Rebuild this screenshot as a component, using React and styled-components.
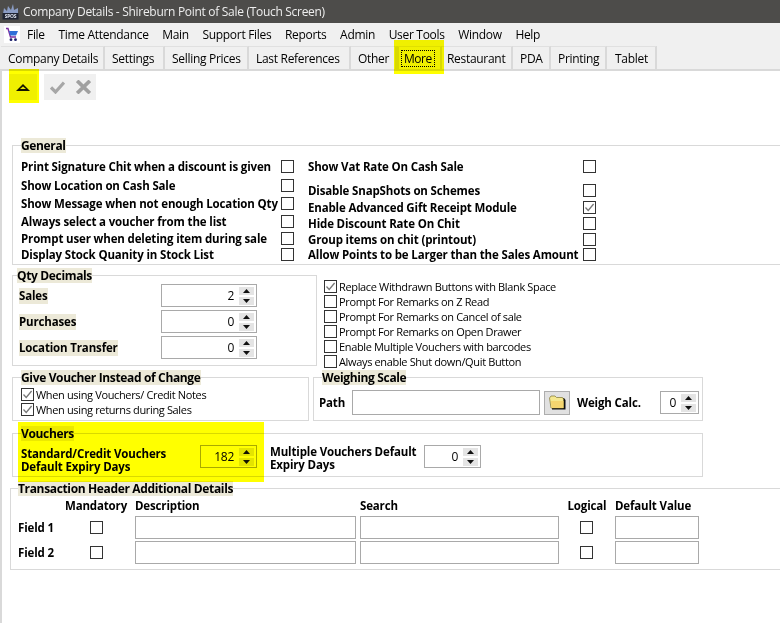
import React from "react";
import styled, { createGlobalStyle } from "styled-components";

const GlobalStyle = createGlobalStyle`
  html, body {
    margin: 0;
    padding: 0;
    background: #fff;
  }
  body {
    width: 780px;
    height: 623px;
    overflow: hidden;
    font-family: "Open Sans", "Noto Sans", sans-serif;
    color: #000;
  }
`;

// label, space under the row
const checksLeft = [
  ["Print Signature Chit when a discount is given", 5],
  ["Show Location on Cash Sale", 4],
  ["Show Message when not enough Location Qty", 4],
  ["Always select a voucher from the list", 3],
  ["Prompt user when deleting item during sale", 2],
  ["Display Stock Quanity in Stock List", 0],
];

const checksRight = [
  ["Show Vat Rate On Cash Sale", 10, false],
  ["Disable SnapShots on Schemes", 3, false],
  ["Enable Advanced Gift Receipt Module", 2, true],
  ["Hide Discount Rate On Chit", 2, false],
  ["Group items on chit (printout)", 1, false],
  ["Allow Points to be Larger than the Sales Amount", 0, false],
];

const extraChecks = [
  ["Replace Withdrawn Buttons with Blank Space", true],
  ["Prompt For Remarks on Z Read", false],
  ["Prompt For Remarks on Cancel of sale", false],
  ["Prompt For Remarks on Open Drawer", false],
  ["Enable Multiple Vouchers with barcodes", false],
  ["Always enable Shut down/Quit Button", false],
];

const menus = ["File", "Time Attendance", "Main", "Support Files", "Reports", "Admin", "User Tools", "Window", "Help"];

// label, width, left padding
const tabs = [
  ["Company Details", 104, 7],
  ["Settings", 60, 7],
  ["Selling Prices", 84, 7],
  ["Last References", 102, 7],
  ["Other", 46, 7],
  ["More", 45, 3],
  ["Restaurant", 71, 5],
  ["PDA", 38, 7],
  ["Printing", 56, 7],
  ["Tablet", 50, 8],
];

function Check({ on }) {
  return (
    <CheckBox>
      {on && (
        <svg width="11" height="11" viewBox="0 0 11 11">
          <path d="M1.5 5.5 L4.2 8.4 L9.6 2" fill="none" stroke="#777" strokeWidth="1.3" />
        </svg>
      )}
    </CheckBox>
  );
}

function Spinner({ value, width, height }) {
  return (
    <SpinBox $width={width} $height={height}>
      <SpinValue>{value}</SpinValue>
      <SpinButtons>
        <SpinButton>
          <svg width="7" height="4" viewBox="0 0 7 4"><path d="M3.5 0 L7 4 H0 Z" fill="#111" /></svg>
        </SpinButton>
        <SpinButton>
          <svg width="7" height="4" viewBox="0 0 7 4"><path d="M0 0 H7 L3.5 4 Z" fill="#111" /></svg>
        </SpinButton>
      </SpinButtons>
    </SpinBox>
  );
}

export default function App() {
  return (
    <Page>
      <GlobalStyle />
      <TitleBar>
        <svg width="17" height="17" viewBox="0 0 17 17">
          <path d="M1 11 L2 5 L5 8 L6 3 L9 7 L11 1 L12 7 L16 5 V11 Z" fill="#8a9cc4" />
          <rect x="0.5" y="10" width="16" height="6.5" fill="#1f2433" />
          <text x="8.5" y="15" textAnchor="middle" fontSize="5" fontWeight="700" fill="#dfe4ef">SPOS</text>
        </svg>
        <span>Company Details - Shireburn Point of Sale (Touch Screen)</span>
      </TitleBar>
      <MenuBar>
        <CartIcon>
          <svg width="14" height="15" viewBox="0 0 14 15">
            <path d="M1 1.5 H3 L5.5 10 H11" fill="none" stroke="#7a2fa0" strokeWidth="1.4" />
            <path d="M4 4 H13 L11 8.5 H5.3 Z" fill="#2f6fd8" />
            <circle cx="6" cy="12.7" r="1.4" fill="#1b1f6b" />
            <circle cx="10.5" cy="12.7" r="1.4" fill="#1b1f6b" />
          </svg>
        </CartIcon>
        {menus.map((m) => <MenuItem key={m}>{m}</MenuItem>)}
      </MenuBar>
      <TabStrip>
        {tabs.map(([t, w, pad]) => (
          <Tab key={t} $w={w} $pad={pad} $active={t === "More"}>
            {t === "More" ? <Focused>{t}</Focused> : t}
          </Tab>
        ))}
      </TabStrip>
      <Body>
        <Toolbar>
          <ToolButton>
            <svg width="14" height="7" viewBox="0 0 14 7">
              <path d="M7 0 L14 7 H0 Z" fill="#111" />
              <path d="M7 2.4 L10 5 H4 Z" fill="#e8e8b0" />
            </svg>
          </ToolButton>
          <ToolGroup>
            <svg width="15" height="13" viewBox="0 0 15 13">
              <path d="M1 6.5 L5.5 11 L14 1.5" fill="none" stroke="#a6a6a6" strokeWidth="3.2" />
            </svg>
            <svg width="15" height="14" viewBox="0 0 15 14">
              <path d="M1.2 0.8 L13.8 13.2 M13.8 0.8 L1.2 13.2" fill="none" stroke="#a0a0a0" strokeWidth="3.6" />
            </svg>
          </ToolGroup>
        </Toolbar>

        <GeneralGroup>
          <Legend>General</Legend>
          <Columns>
            <CheckColumn $width={273}>
              {checksLeft.map(([label, gap]) => (
                <CheckRow key={label} $gap={gap}>
                  <BoldLabel>{label}</BoldLabel>
                  <Check />
                </CheckRow>
              ))}
            </CheckColumn>
            <CheckColumn $width={288}>
              {checksRight.map(([label, gap, on]) => (
                <CheckRow key={label} $gap={gap}>
                  <BoldLabel>{label}</BoldLabel>
                  <Check on={on} />
                </CheckRow>
              ))}
            </CheckColumn>
          </Columns>
        </GeneralGroup>

        <MiddleRow>
          <QtyGroup>
            <Legend $left={4}>Qty Decimals</Legend>
            <QtyRows>
              <QtyRow>
                <Tinted>Sales</Tinted>
                <Spinner value="2" width={96} height={23} />
              </QtyRow>
              <QtyRow>
                <Tinted>Purchases</Tinted>
                <Spinner value="0" width={96} height={23} />
              </QtyRow>
              <QtyRow>
                <Tinted>Location Transfer</Tinted>
                <Spinner value="0" width={96} height={23} />
              </QtyRow>
            </QtyRows>
          </QtyGroup>
          <ExtraList>
            {extraChecks.map(([label, on]) => (
              <ExtraRow key={label}>
                <Check on={on} />
                <span>{label}</span>
              </ExtraRow>
            ))}
          </ExtraList>
        </MiddleRow>

        <SplitRow>
          <VoucherChange>
            <Legend>Give Voucher Instead of Change</Legend>
            <ChangeRows>
              <ExtraRow>
                <Check on />
                <span>When using Vouchers/ Credit Notes</span>
              </ExtraRow>
              <ExtraRow>
                <Check on />
                <span>When using returns during Sales</span>
              </ExtraRow>
            </ChangeRows>
          </VoucherChange>
          <ScaleGroup>
            <Legend>Weighing Scale</Legend>
            <ScaleRow>
              <PathLabel>Path</PathLabel>
              <PathField />
              <FolderButton>
                <svg width="17" height="15" viewBox="0 0 17 15">
                  <path d="M3 14.5 V3 H15 L16.5 5 V14.5 Z" fill="#111" />
                  <path d="M0.5 3 L2 1 H6 L7.5 2.5 H13.5 L14.5 4 V13 H2 Z" fill="#f5e88f" stroke="#7d7430" strokeWidth="0.7" />
                  <path d="M2 6 H14.5 V13 H2.5 Z" fill="#f4d56f" />
                </svg>
              </FolderButton>
              <WeighLabel>Weigh Calc.</WeighLabel>
              <Spinner value="0" width={39} height={23} />
            </ScaleRow>
          </ScaleGroup>
        </SplitRow>

        <VouchersGroup>
          <Legend>Vouchers</Legend>
          <VouchersRow>
            <VoucherText $width={179} $top={2}>
              <VoucherLine>Standard/Credit Vouchers</VoucherLine>
              <VoucherLine>Default Expiry Days</VoucherLine>
            </VoucherText>
            <Spinner value="182" width={57} height={23} />
            <VoucherText $width={154} $offset={13}>
              <VoucherLine>Multiple Vouchers Default</VoucherLine>
              <VoucherLine>Expiry Days</VoucherLine>
            </VoucherText>
            <Spinner value="0" width={57} height={23} />
          </VouchersRow>
        </VouchersGroup>

        <TransactionGroup>
          <Legend $left={7}>Transaction Header Additional Details</Legend>
          <FieldGrid>
            <span />
            <HeadCell $center>Mandatory</HeadCell>
            <HeadCell>Description</HeadCell>
            <HeadCell>Search</HeadCell>
            <HeadCell $center>Logical</HeadCell>
            <HeadCell>Default Value</HeadCell>
            {["Field 1", "Field 2"].map((f) => (
              <React.Fragment key={f}>
                <BoldLabel>{f}</BoldLabel>
                <CellCenter><Check /></CellCenter>
                <GridField />
                <GridField />
                <CellCenter $shift={2}><Check /></CellCenter>
                <GridField />
              </React.Fragment>
            ))}
          </FieldGrid>
        </TransactionGroup>

        <Marker $x={9} $y={69} $w={30} $h={34} />
        <Marker $x={394} $y={40} $w={50} $h={34} />
        <Marker $x={18} $y={422} $w={246} $h={60} />
      </Body>
    </Page>
  );
}

const Page = styled.div`
  position: relative;
  width: 780px;
  height: 623px;
  overflow: hidden;
  display: flex;
  flex-direction: column;
  font-size: 12px;
  letter-spacing: -0.3px;
`;

const TitleBar = styled.div`
  height: 23px;
  flex: none;
  background: #4d4c4a;
  color: #eeeeee;
  display: flex;
  align-items: center;
  gap: 4px;
  padding-left: 2px;
`;

const MenuBar = styled.div`
  height: 23px;
  flex: none;
  background: #f0f0f0;
  display: flex;
  align-items: center;
  padding-left: 4px;
`;

const CartIcon = styled.div`
  width: 16px;
  height: 17px;
  background: #fff;
  display: flex;
  align-items: center;
  justify-content: center;
  margin-right: 7px;
`;

const MenuItem = styled.div`
  margin-right: 13.6px;
  white-space: nowrap;
`;

const TabStrip = styled.div`
  height: 25px;
  flex: none;
  box-sizing: border-box;
  background: #f0f0f0;
  display: flex;
  align-items: flex-end;
  border-bottom: 2px solid #d9d9d9;
  padding-left: 1px;
`;

const Tab = styled.div`
  width: ${(p) => p.$w}px;
  height: 23px;
  display: flex;
  align-items: center;
  box-sizing: border-box;
  white-space: nowrap;
  border-top: 1px solid #e0e0e0;
  border-right: 2px solid #d9d9d9;
  padding-left: ${(p) => p.$pad}px;
  ${(p) => p.$active && "border-left: 2px solid #d9d9d9;"}
`;

const Focused = styled.span`
  outline: 1px dotted #000;
  padding: 0 2px;
  line-height: 15px;
  letter-spacing: -0.5px;
`;

const Body = styled.div`
  flex: 1;
  border-left: 2px solid #d9d9d9;
  display: flex;
  flex-direction: column;
  align-items: flex-start;
  background: #fff;
`;

const Toolbar = styled.div`
  height: 67px;
  flex: none;
  display: flex;
  align-items: flex-start;
  gap: 7px;
  padding: 3px 0 0 7px;
  box-sizing: border-box;
`;

const ToolButton = styled.div`
  width: 28px;
  height: 26px;
  background: #f0f0f0;
  display: flex;
  align-items: center;
  justify-content: center;
`;

const ToolGroup = styled.div`
  width: 52px;
  height: 26px;
  background: #f0f0f0;
  display: flex;
  align-items: center;
  gap: 11px;
  padding-left: 6px;
  box-sizing: border-box;
`;

const Group = styled.fieldset`
  margin: 0;
  padding: 0;
  border: 1px solid #d9d9d9;
  box-sizing: border-box;
  min-width: 0;
`;

const Legend = styled.legend`
  margin-left: ${(p) => (p.$left === undefined ? 8 : p.$left)}px;
  padding: 0;
  background: #ece9d8;
  font-weight: 700;
  font-size: 12px;
  line-height: 15px;
  letter-spacing: -0.35px;
  white-space: nowrap;
`;

const GeneralGroup = styled(Group)`
  width: 780px;
  height: 127px;
  margin-left: 10px;
`;

const Columns = styled.div`
  display: flex;
  gap: 14px;
  padding: 6px 0 0 8px;
`;

const CheckColumn = styled.div`
  width: ${(p) => p.$width}px;
`;

const CheckRow = styled.div`
  height: 14px;
  margin-bottom: ${(p) => p.$gap}px;
  display: flex;
  align-items: center;
  justify-content: space-between;
`;

const BoldLabel = styled.span`
  font-weight: 700;
  font-size: 11.5px;
  letter-spacing: -0.15px;
  white-space: nowrap;
`;

const CheckBox = styled.div`
  width: 13px;
  height: 13px;
  flex: none;
  border: 1px solid #333;
  box-sizing: border-box;
  background: #fff;
  display: flex;
  align-items: center;
  justify-content: center;
`;

const MiddleRow = styled.div`
  height: 98px;
  display: flex;
  margin: 3px 0 0 10px;
  gap: 7px;
`;

const QtyGroup = styled(Group)`
  width: 305px;
  height: 98px;
`;

const QtyRows = styled.div`
  display: flex;
  flex-direction: column;
  gap: 3px;
  padding: 1px 0 0 6px;
`;

const QtyRow = styled.div`
  width: 238px;
  display: flex;
  align-items: center;
  justify-content: space-between;
`;

const Tinted = styled(BoldLabel)`
  background: #ece9d8;
  line-height: 16px;
`;

const SpinBox = styled.div`
  width: ${(p) => p.$width}px;
  height: ${(p) => p.$height}px;
  flex: none;
  border: 1px solid #a9a9a9;
  box-sizing: border-box;
  display: flex;
  align-items: center;
  justify-content: flex-end;
  padding-right: 2px;
  background: #fff;
`;

const SpinValue = styled.span`
  padding-right: 5px;
`;

const SpinButtons = styled.div`
  width: 15px;
  display: flex;
  flex-direction: column;
  gap: 2px;
`;

const SpinButton = styled.div`
  height: 8px;
  background: #e4e4e4;
  display: flex;
  align-items: center;
  justify-content: center;
`;

const ExtraList = styled.div`
  padding-top: 11px;
`;

const ExtraRow = styled.div`
  height: 15px;
  display: flex;
  align-items: center;
  gap: 2px;
  font-size: 11px;
  letter-spacing: -0.35px;
  white-space: nowrap;
`;

const SplitRow = styled.div`
  display: flex;
  margin: 4px 0 0 10px;
  gap: 4px;
`;

const VoucherChange = styled(Group)`
  width: 297px;
  height: 51px;
`;

const ChangeRows = styled.div`
  padding: 2px 0 0 8px;
`;

const ScaleGroup = styled(Group)`
  width: 390px;
  height: 51px;
`;

const ScaleRow = styled.div`
  display: flex;
  align-items: center;
  padding: 5px 0 0 5px;
`;

const PathLabel = styled(BoldLabel)`
  width: 33px;
`;

const PathField = styled.div`
  width: 188px;
  height: 25px;
  border: 1px solid #a9a9a9;
  box-sizing: border-box;
`;

const FolderButton = styled.div`
  width: 26px;
  height: 24px;
  margin-left: 4px;
  background: #e1e1e1;
  border: 1px solid #adadad;
  box-sizing: border-box;
  display: flex;
  align-items: center;
  justify-content: center;
`;

const WeighLabel = styled(BoldLabel)`
  width: 64px;
  margin: 0 19px 0 7px;
`;

const VouchersGroup = styled(Group)`
  width: 691px;
  height: 51px;
  margin: 5px 0 0 10px;
`;

const VouchersRow = styled.div`
  display: flex;
  align-items: flex-start;
  padding: 4px 0 0 8px;
`;

const VoucherText = styled.div`
  flex: none;
  width: ${(p) => p.$width}px;
  margin: ${(p) => p.$top || 0}px 0 0 ${(p) => p.$offset || 0}px;
`;

const VoucherLine = styled(BoldLabel)`
  display: block;
  height: 13px;
  line-height: 13px;
`;

const TransactionGroup = styled(Group)`
  width: 780px;
  height: 89px;
  margin: 4px 0 0 8px;
`;

const FieldGrid = styled.div`
  display: grid;
  grid-template-columns: 39px 70px 221px 199px 48px 84px;
  grid-template-rows: 17px 23px 23px;
  column-gap: 4px;
  row-gap: 2px;
  align-items: center;
  padding: 1px 0 0 7px;
`;

const HeadCell = styled(BoldLabel)`
  text-align: ${(p) => (p.$center ? "center" : "left")};
`;

const CellCenter = styled.div`
  display: flex;
  justify-content: center;
  padding-right: ${(p) => p.$shift || 0}px;
`;

const GridField = styled.div`
  height: 23px;
  border: 1px solid #a9a9a9;
  box-sizing: border-box;
`;

const Marker = styled.div`
  position: absolute;
  left: ${(p) => p.$x}px;
  top: ${(p) => p.$y}px;
  width: ${(p) => p.$w}px;
  height: ${(p) => p.$h}px;
  background: #ffff00;
  mix-blend-mode: multiply;
  pointer-events: none;
`;
